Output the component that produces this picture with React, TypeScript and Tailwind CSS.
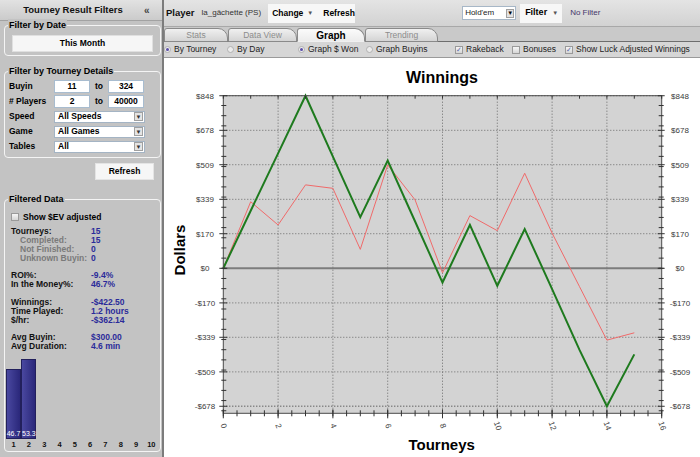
import React from 'react';

const green = [0, 283, 565, 848, 549, 251, 529, 230, -70, 213, -86, 193, -102, -401, -678, -423];
const red = [0, 327, 213, 410, 393, 93, 508, 336, -22, 259, 185, 467, 173, -90, -353, -317];
const yLabels = [848, 678, 509, 339, 170, 0, -170, -339, -509, -678];

const stats: [string, string, boolean][] = [
  ['Tourneys:', '15', false],
  ['Completed:', '15', true],
  ['Not Finished:', '0', true],
  ['Unknown Buyin:', '0', true],
  ['', '', false],
  ['ROI%:', '-9.4%', false],
  ['In the Money%:', '46.7%', false],
  ['', '', false],
  ['Winnings:', '-$422.50', false],
  ['Time Played:', '1.2 hours', false],
  ['$/hr:', '-$362.14', false],
  ['', '', false],
  ['Avg Buyin:', '$300.00', false],
  ['Avg Duration:', '4.6 min', false],
];

const bars = [46.7, 53.3, 0, 0, 0, 0, 0, 0, 0, 0];

function Group({ title, className = '', children }: { title: string; className?: string; children?: React.ReactNode }) {
  return (
    <div className={`relative ml-[4px] mr-[1px] rounded-[4px] border border-[#f4f4f4] ${className}`}>
      <span className="absolute -top-[7px] left-[3px] bg-[#c3c3c3] px-[1px] text-[9px] font-bold leading-[12px] text-black">
        {title}
      </span>
      {children}
    </div>
  );
}

const Check = ({ on }: { on?: boolean }) => (
  <span className="inline-flex h-[8px] w-[8px] shrink-0 items-center justify-center border border-[#9a9a9a] bg-linear-to-b from-[#f6f6f6] to-[#d6d6d6] text-[7px] leading-none text-[#5a6aa8]">
    {on ? '✓' : ''}
  </span>
);

const Radio = ({ on }: { on?: boolean }) => (
  <span className="inline-flex h-[7px] w-[7px] shrink-0 items-center justify-center rounded-full border border-[#b0b0b0] bg-[#ececec]">
    {on && <span className="h-[3px] w-[3px] rounded-full bg-[#5b4fa8]" />}
  </span>
);

const Select = ({ value }: { value: string }) => (
  <div className="flex h-[12px] w-[91px] items-center border border-[#a4b4c4] bg-white">
    <span className="flex-1 pl-[3px] text-[8.5px] font-bold leading-none">{value}</span>
    <span className="mr-[1px] flex h-[9px] w-[9px] items-center justify-center border border-[#a0a0a0] bg-[#e4e4e4] text-[6px] leading-none text-[#333]">▼</span>
  </div>
);

const Input = ({ value }: { value: string }) => (
  <div className="flex h-[13px] w-[36px] items-center justify-center border border-[#a8bccf] bg-white text-[8.5px] font-bold leading-none">
    {value}
  </div>
);

function LeftPanel() {
  return (
    <div className="flex h-full w-[162px] shrink-0 flex-col bg-[#c3c3c3]">
      <div className="flex h-[21px] items-center border-b border-[#a2a2a2] bg-linear-to-b from-[#e2e2e2] to-[#cbcbcb]">
        <span className="flex-1 pl-[2px] text-center text-[9.5px] font-bold text-[#111]">Tourney Result Filters</span>
        <span className="w-[18px] text-[10px] font-bold text-[#444]">«</span>
      </div>

      <Group title="Filter by Date" className="mt-[4px] h-[31px]">
        <div className="ml-[7px] mt-[9px] flex h-[17px] w-[141px] items-center justify-center border border-[#e0e0e0] bg-[#f6f6f6] text-[8.5px] font-bold">
          This Month
        </div>
      </Group>

      <Group title="Filter by Tourney Details" className="mt-[15px] h-[87px]">
        <div className="flex flex-col pl-[4px] pt-[7px]">
          <div className="flex h-[15px] items-center">
            <span className="w-[45px] text-[8.5px] font-bold">Buyin</span>
            <Input value="11" />
            <span className="w-[18px] text-center text-[8.5px] font-bold">to</span>
            <Input value="324" />
          </div>
          <div className="flex h-[15px] items-center">
            <span className="w-[45px] text-[8.5px] font-bold"># Players</span>
            <Input value="2" />
            <span className="w-[18px] text-center text-[8.5px] font-bold">to</span>
            <Input value="40000" />
          </div>
          <div className="flex h-[15px] items-center">
            <span className="w-[45px] text-[8.5px] font-bold">Speed</span>
            <Select value="All Speeds" />
          </div>
          <div className="flex h-[15px] items-center">
            <span className="w-[45px] text-[8.5px] font-bold">Game</span>
            <Select value="All Games" />
          </div>
          <div className="flex h-[15px] items-center">
            <span className="w-[45px] text-[8.5px] font-bold">Tables</span>
            <Select value="All" />
          </div>
        </div>
      </Group>

      <div className="ml-[95px] mt-[5px] flex h-[17px] w-[59px] items-center justify-center border border-[#e4e4e4] bg-[#f6f6f6] text-[8.5px] font-bold">
        Refresh
      </div>

      <Group title="Filtered Data" className="mt-[19px] h-[253px]">
        <div className="flex flex-col pl-[6px] pt-[12px]">
          <div className="flex h-[10px] items-center gap-[4px]">
            <Check />
            <span className="text-[8.5px] font-bold">Show $EV adjusted</span>
          </div>
          <div className="mt-[5px] flex flex-col">
            {stats.map(([l, v, sub], i) => (
              <div key={i} className="flex h-[8.85px] items-center text-[8.5px] font-bold leading-none">
                <span className={`w-[80px] ${sub ? 'pl-[9px] text-[#7a7a7a]' : 'text-[#111]'}`}>{l}</span>
                <span className="text-[#2b2b9a]">{v}</span>
              </div>
            ))}
          </div>
          <div className="-ml-[5px] mt-[1px] flex h-[87px] items-end">
            {bars.map((b, i) => (
              <div key={i} className="flex w-[15.3px] items-end">
                {b > 0 && (
                  <div
                    className="flex w-[15px] items-end justify-center border border-[#22205c] bg-linear-to-r from-[#4a48a0] to-[#2a277a] pb-[1px] text-[7px] leading-none text-white"
                    style={{ height: b * 1.5 }}
                  >
                    {b}
                  </div>
                )}
              </div>
            ))}
          </div>
          <div className="-ml-[5px] flex h-[11px] items-center">
            {bars.map((_, i) => (
              <span key={i} className="w-[15.3px] text-center text-[7.5px] font-bold text-[#111]">
                {i + 1}
              </span>
            ))}
          </div>
        </div>
      </Group>
    </div>
  );
}

function TopBar() {
  return (
    <div className="flex h-[27px] shrink-0 items-center border-b border-[#a8a8a8] bg-linear-to-b from-[#e4e4e4] to-[#d2d2d2]">
      <span className="ml-[2px] text-[9.5px] font-bold text-[#111]">Player</span>
      <span className="ml-[7px] text-[8px] text-[#333]">la_gâchette (PS)</span>
      <div className="ml-[7px] flex h-[19px] w-[87px] items-center bg-[#f7f7f7] text-[8.5px] font-bold">
        <span className="ml-[4px]">Change</span>
        <span className="ml-[4px] text-[6px] text-[#555]">▼</span>
        <span className="ml-[10px]">Refresh</span>
      </div>
      <div className="ml-[107px] flex h-[14px] w-[54px] items-center border border-[#a7b7c7] bg-white">
        <span className="flex-1 pl-[2px] text-[8px] text-[#222]">Hold'em</span>
        <span className="mr-[1px] flex h-[9px] w-[8px] items-center justify-center border border-[#a0a0a0] bg-[#e2e2e2] text-[6px] leading-none">▼</span>
      </div>
      <div className="ml-[4px] flex h-[19px] w-[42px] items-center bg-[#f7f7f7]">
        <span className="ml-[5px] text-[9px] font-bold">Filter</span>
        <span className="ml-[5px] text-[6px] text-[#555]">▼</span>
      </div>
      <span className="ml-[8px] text-[8px] text-[#45366a]">No Filter</span>
    </div>
  );
}

function Tabs() {
  const tabs = [
    { name: 'Stats', w: 64 },
    { name: 'Data View', w: 69 },
    { name: 'Graph', w: 68, on: true },
    { name: 'Trending', w: 73 },
  ];
  return (
    <div className="flex h-[15px] shrink-0 items-end border-b border-[#6e6e6e] bg-[#c9c9c9]">
      {tabs.map((t) => (
        <div
          key={t.name}
          style={{ width: t.w }}
          className={`-mb-px flex h-[14px] items-center justify-center rounded-tl-[3px] rounded-tr-[10px] border border-[#8a8a8a] ${
            t.on
              ? 'border-b-[#f0f0f0] bg-linear-to-b from-[#fbfbfb] to-[#ececec] text-[10px] font-bold text-black'
              : 'bg-linear-to-b from-[#f0f0f0] to-[#d4d4d4] text-[8.5px] text-[#8c8c8c]'
          }`}
        >
          {t.name}
        </div>
      ))}
    </div>
  );
}

function Options() {
  const items: { w: number; label: string; kind: 'r' | 'c'; on: boolean }[] = [
    { w: 63, label: 'By Tourney', kind: 'r', on: true },
    { w: 71, label: 'By Day', kind: 'r', on: false },
    { w: 68, label: 'Graph $ Won', kind: 'r', on: true },
    { w: 89, label: 'Graph Buyins', kind: 'r', on: false },
    { w: 57, label: 'Rakeback', kind: 'c', on: true },
    { w: 53, label: 'Bonuses', kind: 'c', on: false },
    { w: 130, label: 'Show Luck Adjusted Winnings', kind: 'c', on: true },
  ];
  return (
    <div className="flex h-[16px] shrink-0 items-center border-b border-[#9a9a9a] bg-[#d6d6d6]">
      {items.map((it) => (
        <div key={it.label} style={{ width: it.w }} className="flex shrink-0 items-center gap-[3px]">
          {it.kind === 'r' ? <Radio on={it.on} /> : <Check on={it.on} />}
          <span className="text-[8.5px] text-[#222]">{it.label}</span>
        </div>
      ))}
    </div>
  );
}

function Chart() {
  const PL = 59.3;
  const PR = 497.7;
  const PT = 37.7;
  const PB = 355.3;
  const X = (i: number) => PL + i * 27.4;
  const Y = (v: number) => 210.3 - v * 0.2035;
  const minor: number[] = [];
  for (let v = -700; v <= 848; v += 50) minor.push(v);
  const halfSteps: number[] = [];
  for (let i = 0; i <= 32; i++) halfSteps.push(i / 2);
  const evens = [0, 2, 4, 6, 8, 10, 12, 14, 16];
  const pts = (d: number[]) => d.map((v, i) => `${X(i)},${Y(v)}`).join(' ');
  const lab = '#3a3a3a';

  return (
    <svg width={536} height={399} className="block font-['Liberation_Sans',Arial,sans-serif]">
      <text x={278} y={25} textAnchor="middle" fontSize={16} fontWeight="bold" fill="#000">
        Winnings
      </text>
      <rect x={PL} y={PT} width={PR - PL} height={PB - PT} fill="#d3d3d3" />
      {yLabels
        .filter((v) => v !== 0)
        .map((v) => (
          <line key={v} x1={PL} x2={PR} y1={Y(v)} y2={Y(v)} stroke="#6a6a6a" strokeDasharray="1 2" strokeWidth={v === -678 ? 1.5 : 1} />
        ))}
      {evens.slice(1, 8).map((i) => (
        <line key={i} x1={X(i)} x2={X(i)} y1={PT} y2={PB} stroke="#6a6a6a" strokeDasharray="1 2" />
      ))}
      <line x1={PL} x2={PR} y1={Y(0)} y2={Y(0)} stroke="#7c7c7c" strokeWidth={2} />
      <polyline points={pts(red)} fill="none" stroke="#f06a6a" strokeWidth={1} />
      <polyline points={pts(green)} fill="none" stroke="#1e7a1e" strokeWidth={2} strokeLinejoin="miter" />
      <rect x={PL} y={PT} width={PR - PL} height={PB - PT} fill="none" stroke="#4a4a4a" />

      {/* y ticks */}
      {minor.map((v) => (
        <g key={v} stroke="#333">
          <line x1={PL - 2} x2={PL + 3} y1={Y(v)} y2={Y(v)} />
          <line x1={PR - 3} x2={PR + 2} y1={Y(v)} y2={Y(v)} />
        </g>
      ))}
      {yLabels.map((v) => (
        <g key={v} stroke="#333">
          <line x1={PL - 4} x2={PL + 4} y1={Y(v)} y2={Y(v)} />
          <line x1={PR - 4} x2={PR + 3} y1={Y(v)} y2={Y(v)} />
        </g>
      ))}
      {/* x ticks */}
      {halfSteps.map((i) => (
        <line key={i} x1={X(i)} x2={X(i)} y1={PB - 3} y2={PB + 3} stroke="#333" />
      ))}
      {evens.map((i) => (
        <line key={i} x1={X(i)} x2={X(i)} y1={PB - 4} y2={PB + 5} stroke="#333" />
      ))}
      {halfSteps
        .filter((i) => Number.isInteger(i))
        .map((i) => (
          <line key={i} x1={X(i)} x2={X(i)} y1={PT} y2={PT + 3} stroke="#333" />
        ))}

      {yLabels.map((v) => (
        <g key={v} fontSize={8} fill={lab} textAnchor="middle">
          <text x={41} y={Y(v) + 3}>
            {(v < 0 ? '-$' : '$') + Math.abs(v)}
          </text>
          <text x={516} y={Y(v) + 3}>
            {(v < 0 ? '-$' : '$') + Math.abs(v)}
          </text>
        </g>
      ))}
      {evens.map((i) => (
        <text
          key={i}
          transform={`translate(${X(i)},368) rotate(70)`}
          textAnchor="middle"
          dominantBaseline="middle"
          fontSize={8}
          fill={lab}
        >
          {i}
        </text>
      ))}
      <text transform="translate(21,192) rotate(-90)" textAnchor="middle" fontSize={15} fontWeight="bold" fill="#000">
        Dollars
      </text>
      <text x={277.7} y={392} textAnchor="middle" fontSize={15} fontWeight="bold" fill="#000">
        Tourneys
      </text>
    </svg>
  );
}

export default function App() {
  return (
    <div className="flex h-[457px] w-[700px] overflow-hidden bg-[#c3c3c3] font-['Liberation_Sans',Arial,sans-serif] text-black">
      <LeftPanel />
      <div className="w-[2px] shrink-0 bg-[#7c7c7c]" />
      <div className="flex min-w-0 flex-1 flex-col">
        <TopBar />
        <Tabs />
        <Options />
        <div className="flex-1 bg-white">
          <Chart />
        </div>
      </div>
    </div>
  );
}
